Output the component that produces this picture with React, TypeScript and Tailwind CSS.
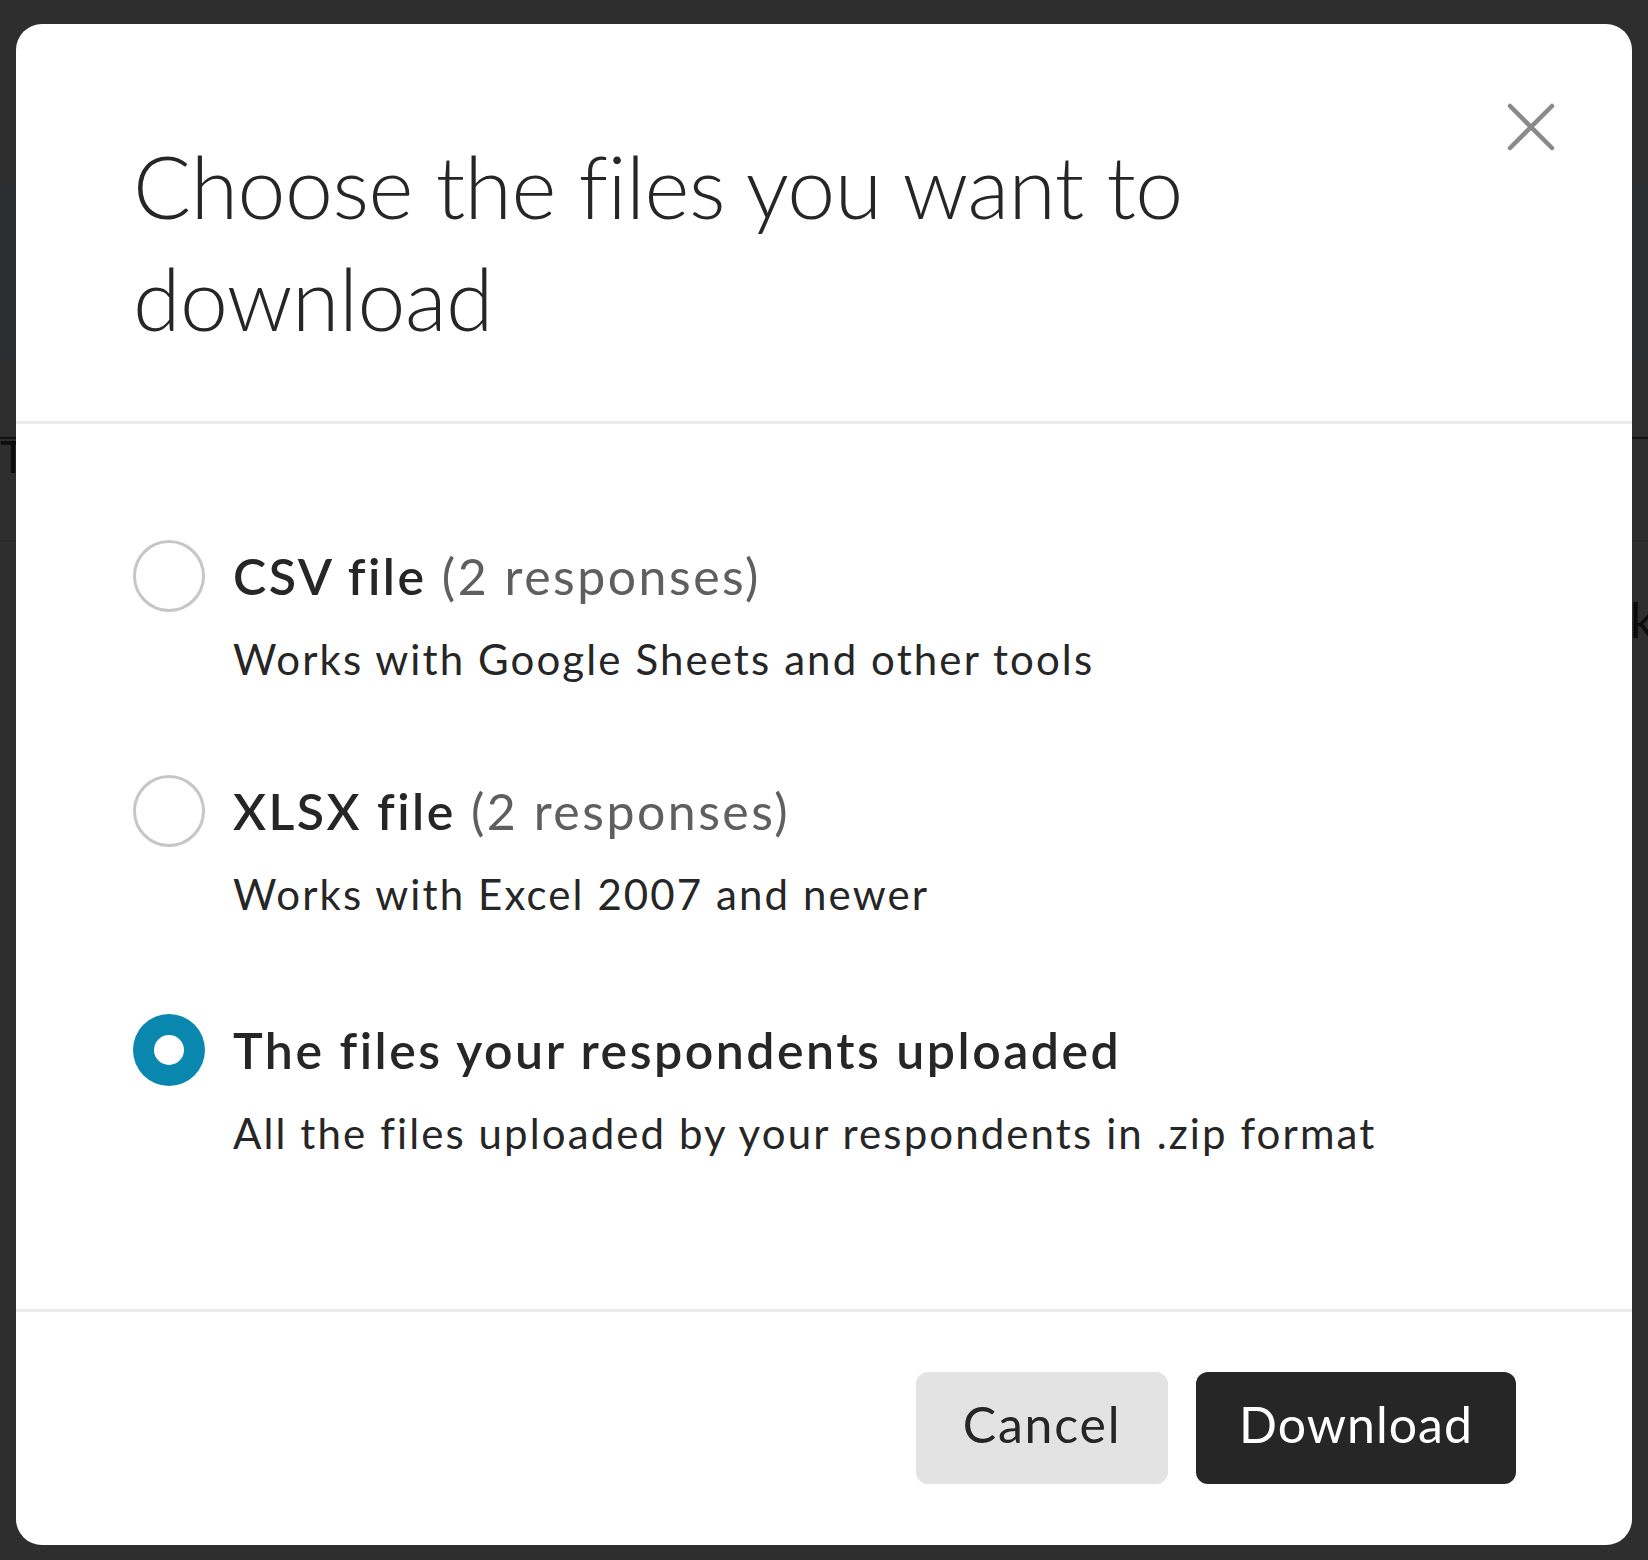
import React, { useState } from "react";

const options = [
  {
    id: "csv",
    title: "CSV file",
    extra: "(2 responses)",
    desc: "Works with Google Sheets and other tools",
    mt: "mt-0",
  },
  {
    id: "xlsx",
    title: "XLSX file",
    extra: "(2 responses)",
    desc: "Works with Excel 2007 and newer",
    mt: "mt-[88px]",
  },
  {
    id: "files",
    title: "The files your respondents uploaded",
    extra: "",
    desc: "All the files uploaded by your respondents in .zip format",
    mt: "mt-[92px]",
  },
];

function Radio({ checked }: { checked: boolean }) {
  return checked ? (
    <span className="flex h-[72px] w-[72px] shrink-0 items-center justify-center rounded-full bg-[#0a87ae]">
      <span className="h-[30px] w-[30px] rounded-full bg-white" />
    </span>
  ) : (
    <span className="h-[72px] w-[72px] shrink-0 rounded-full border-[3px] border-[#c6c6c6] bg-white" />
  );
}

export default function App() {
  const [selected, setSelected] = useState("files");
  return (
    <div
      className="relative h-[1560px] w-full overflow-hidden bg-[#2e2e2e]"
      style={{ fontFamily: "Lato, 'Noto Sans', sans-serif" }}
    >
      {/* faint page beneath the overlay */}
      <div className="flex flex-col pt-[180px]">
        <div className="h-[183px] bg-[#2a2e30]" />
        <div className="mt-[74px] h-[2px] bg-[#121212]" />
        <div className="h-[35px] text-[44px] leading-[35px] text-[#0c0c0c]">T</div>
        <div className="mt-[66px] h-[2px] bg-[#282828]" />
      </div>
      <div className="absolute left-[1630px] top-[596px] text-[48px] leading-[48px] text-[#0c0c0c]">k</div>

      {/* modal */}
      <div className="absolute left-[16px] top-[24px] flex h-[1521px] w-[1616px] flex-col overflow-hidden rounded-[26px] bg-white">
        <button
          aria-label="Close"
          className="absolute right-[77px] top-[79px] h-[48px] w-[48px]"
        >
          <svg viewBox="0 0 48 48" width="48" height="48">
            <path
              d="M3 3 L45 45 M45 3 L3 45"
              stroke="#8a8a8a"
              strokeWidth="4.5"
              strokeLinecap="round"
              fill="none"
            />
          </svg>
        </button>

        <div className="border-b-[3px] border-[#ebebeb] pl-[117px] pr-[300px] pt-[106px] pb-[67px]">
          <h1 className="text-[86px] font-light leading-[112px] tracking-[-0.5px] text-[#262626]">
            Choose the files you want to download
          </h1>
        </div>

        <div className="flex flex-1 flex-col pl-[117px] pt-[116px]">
          {options.map((o) => (
            <label
              key={o.id}
              className={`flex cursor-pointer items-start gap-[28px] ${o.mt}`}
              onClick={() => setSelected(o.id)}
            >
              <Radio checked={selected === o.id} />
              <div className="flex flex-col">
                <div className="text-[50px] leading-[72px] tracking-[2.5px] text-[#262626]">
                  <span className="font-semibold">{o.title}</span>
                  {o.extra && <span className="text-[#5f5f5f]"> {o.extra}</span>}
                </div>
                <div className="mt-[19px] text-[42px] leading-[56px] tracking-[2.1px] text-[#262626]">
                  {o.desc}
                </div>
              </div>
            </label>
          ))}
        </div>

        <div className="flex justify-end gap-[28px] border-t-[3px] border-[#ebebeb] pb-[61px] pr-[116px] pt-[60px]">
          <button className="h-[112px] w-[252px] rounded-[12px] bg-[#e3e3e3] pb-[8px] text-[50px] tracking-[1.8px] text-[#262626]">
            Cancel
          </button>
          <button className="h-[112px] w-[320px] rounded-[12px] bg-[#262626] pb-[8px] text-[50px] tracking-[1px] text-white">
            Download
          </button>
        </div>
      </div>
    </div>
  );
}
